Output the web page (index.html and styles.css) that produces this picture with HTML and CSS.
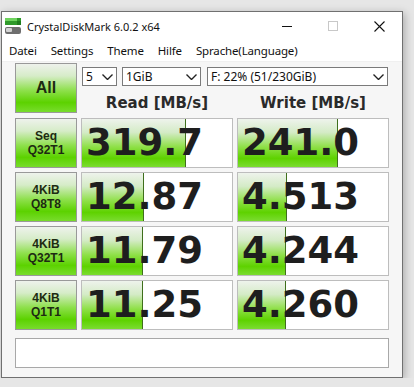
FILE: index.html
```html
<!DOCTYPE html>
<html lang="de">
<head>
   <meta charset="UTF-8">
   <meta name="viewport" content="width=device-width, initial-scale=1">
   <link rel="stylesheet" href="styles.css">
   <title>CrystalDiskMark 6.0.2 x64</title>
</head>

<body>

   <div class="janela">
      <!-- barra de titulo -->
      <div class="titulo">
         <svg class="icone" width="16" height="16" viewBox="0 0 16 16">
            <rect x="0" y="0" width="16" height="7" fill="#2f9a2a"/>
            <rect x="0" y="0" width="12" height="3" fill="#6fd35e"/>
            <rect x="12" y="3" width="4" height="4" fill="#1f7d1d"/>
            <rect x="0" y="9" width="16" height="7" rx="2" fill="#6e6e6e"/>
            <rect x="1" y="10" width="6" height="4" rx="1" fill="#d2d2d2"/>
         </svg>
         <span class="nome">CrystalDiskMark 6.0.2 x64</span>
         <div class="controles">
            <div class="ctrl">
               <svg width="10" height="10" viewBox="0 0 10 10"><line x1="0" y1="5.5" x2="10" y2="5.5" stroke="#111" stroke-width="1"/></svg>
            </div>
            <div class="ctrl">
               <svg width="10" height="10" viewBox="0 0 10 10"><rect x="0.5" y="0.5" width="9" height="9" fill="none" stroke="#c8c8c8" stroke-width="1"/></svg>
            </div>
            <div class="ctrl">
               <svg width="11" height="11" viewBox="0 0 11 11"><path d="M0.5 0.5 L10.5 10.5 M10.5 0.5 L0.5 10.5" stroke="#111" stroke-width="1.1"/></svg>
            </div>
         </div>
      </div>

      <!-- menu -->
      <div class="menu">
         <span>Datei</span>
         <span>Settings</span>
         <span>Theme</span>
         <span>Hilfe</span>
         <span>Sprache(Language)</span>
      </div>

      <div class="conteudo">
         <div class="grade">
            <div class="botao todos">All</div>

            <div class="topo">
               <div class="selecoes">
                  <div class="selecao s1"><span>5</span><svg width="11" height="6" viewBox="0 0 11 6"><path d="M0.5 0.5 L5.5 5.5 L10.5 0.5" fill="none" stroke="#222" stroke-width="1.4"/></svg></div>
                  <div class="selecao s2"><span>1GiB</span><svg width="11" height="6" viewBox="0 0 11 6"><path d="M0.5 0.5 L5.5 5.5 L10.5 0.5" fill="none" stroke="#222" stroke-width="1.4"/></svg></div>
                  <div class="selecao s3"><span>F: 22% (51/230GiB)</span><svg width="11" height="6" viewBox="0 0 11 6"><path d="M0.5 0.5 L5.5 5.5 L10.5 0.5" fill="none" stroke="#222" stroke-width="1.4"/></svg></div>
               </div>
               <div class="cabecalho">
                  <span>Read [MB/s]</span>
                  <span>Write [MB/s]</span>
               </div>
            </div>

            <div class="botao">Seq<br>Q32T1</div>
            <div class="valor"><div class="barra" style="width:104px"></div><span>319.7</span></div>
            <div class="valor"><div class="barra" style="width:100px"></div><span>241.0</span></div>

            <div class="botao">4KiB<br>Q8T8</div>
            <div class="valor"><div class="barra" style="width:62px"></div><span>12.87</span></div>
            <div class="valor"><div class="barra" style="width:49px"></div><span>4.513</span></div>

            <div class="botao">4KiB<br>Q32T1</div>
            <div class="valor"><div class="barra" style="width:61px"></div><span>11.79</span></div>
            <div class="valor"><div class="barra" style="width:48px"></div><span>4.244</span></div>

            <div class="botao">4KiB<br>Q1T1</div>
            <div class="valor"><div class="barra" style="width:61px"></div><span>11.25</span></div>
            <div class="valor"><div class="barra" style="width:48px"></div><span>4.260</span></div>
         </div>

         <div class="comentario"></div>
      </div>
   </div>

</body>
</html>
```

FILE: styles.css
```css
* {
   margin:0;
   padding:0;
   box-sizing:border-box;
}

body {
   background:#e6e6e6;
   font-family:"Segoe UI", "Noto Sans", sans-serif;
   color:#111;
}

.janela {
   margin:11px 0 0 1px;
   width:402px;
   height:367px;
   border:1px solid #707070;
   background:#f6f6f6;
   box-shadow:2px 2px 8px rgba(0,0,0,.25);
   display:flex;
   flex-direction:column;
}

/* barra de titulo */
.titulo {
   height:28px;
   background:#fff;
   display:flex;
   align-items:center;
}

.icone {
   margin-left:3px;
   margin-right:6px;
}

.nome {
   font-size:11px;
   flex:1;
}

.controles {
   display:flex;
   height:100%;
}

.ctrl {
   width:46px;
   height:100%;
   display:flex;
   align-items:center;
   justify-content:center;
}

/* menu */
.menu {
   height:22px;
   background:#fff;
   display:flex;
   align-items:center;
   gap:14px;
   padding-left:7px;
   font-size:11.5px;
   letter-spacing:-.15px;
   border-bottom:1px solid #f0f0f0;
}

/* area principal */
.conteudo {
   padding:1px 0 0 13px;
}

.grade {
   display:grid;
   grid-template-columns:62px 152px 152px;
   grid-template-rows:51px repeat(4, 50px);
   column-gap:4px;
   row-gap:4px;
}

.botao {
   border:1px solid #999;
   background:linear-gradient(#eef2ec 0%, #d6ecc8 25%, #8ee04c 55%, #5cd200 80%, #78dc2c 100%);
   display:flex;
   align-items:center;
   justify-content:center;
   text-align:center;
   font-family:"Liberation Sans", Arial, sans-serif;
   font-weight:bold;
   font-size:12px;
   line-height:14px;
   color:#1d2a12;
}

.todos {
   height:50px;
   font-size:16px;
}

.topo {
   grid-column:2 / 4;
   display:flex;
   flex-direction:column;
}

.selecoes {
   display:flex;
   margin:4px 0 0 1px;
}

.selecao {
   height:19px;
   border:1px solid #7a7a7a;
   background:#fff;
   display:flex;
   align-items:center;
   justify-content:space-between;
   padding:0 3px 0 3px;
   font-size:12px;
}

.s1 { width:35px; }
.s2 { width:79px; margin-left:5px; }
.s3 { width:181px; margin-left:6px; }

.cabecalho {
   display:grid;
   grid-template-columns:152px 152px;
   column-gap:4px;
   margin-top:8px;
   text-align:center;
   font-family:"DejaVu Sans", Verdana, sans-serif;
   font-weight:bold;
   font-size:15px;
   line-height:18px;
   color:#2a2a2a;
}

.valor {
   border:1px solid #bdbdbd;
   background:#fff;
   position:relative;
   overflow:hidden;
}

.barra {
   position:absolute;
   left:0;
   top:0;
   bottom:0;
   background:linear-gradient(#eef3ec 0%, #d4ebc6 28%, #8fe048 58%, #5ed200 82%, #7bdc30 100%);
   border-right:1px solid #3f6f1c;
}

.valor span {
   position:relative;
   display:block;
   padding-left:4px;
   font-family:"DejaVu Sans", Verdana, sans-serif;
   font-weight:bold;
   font-size:37px;
   line-height:48px;
   color:#1e1e1e;
}

.comentario {
   margin-top:8px;
   width:374px;
   height:30px;
   border:1px solid #a8a8a8;
   background:#fff;
}
```
